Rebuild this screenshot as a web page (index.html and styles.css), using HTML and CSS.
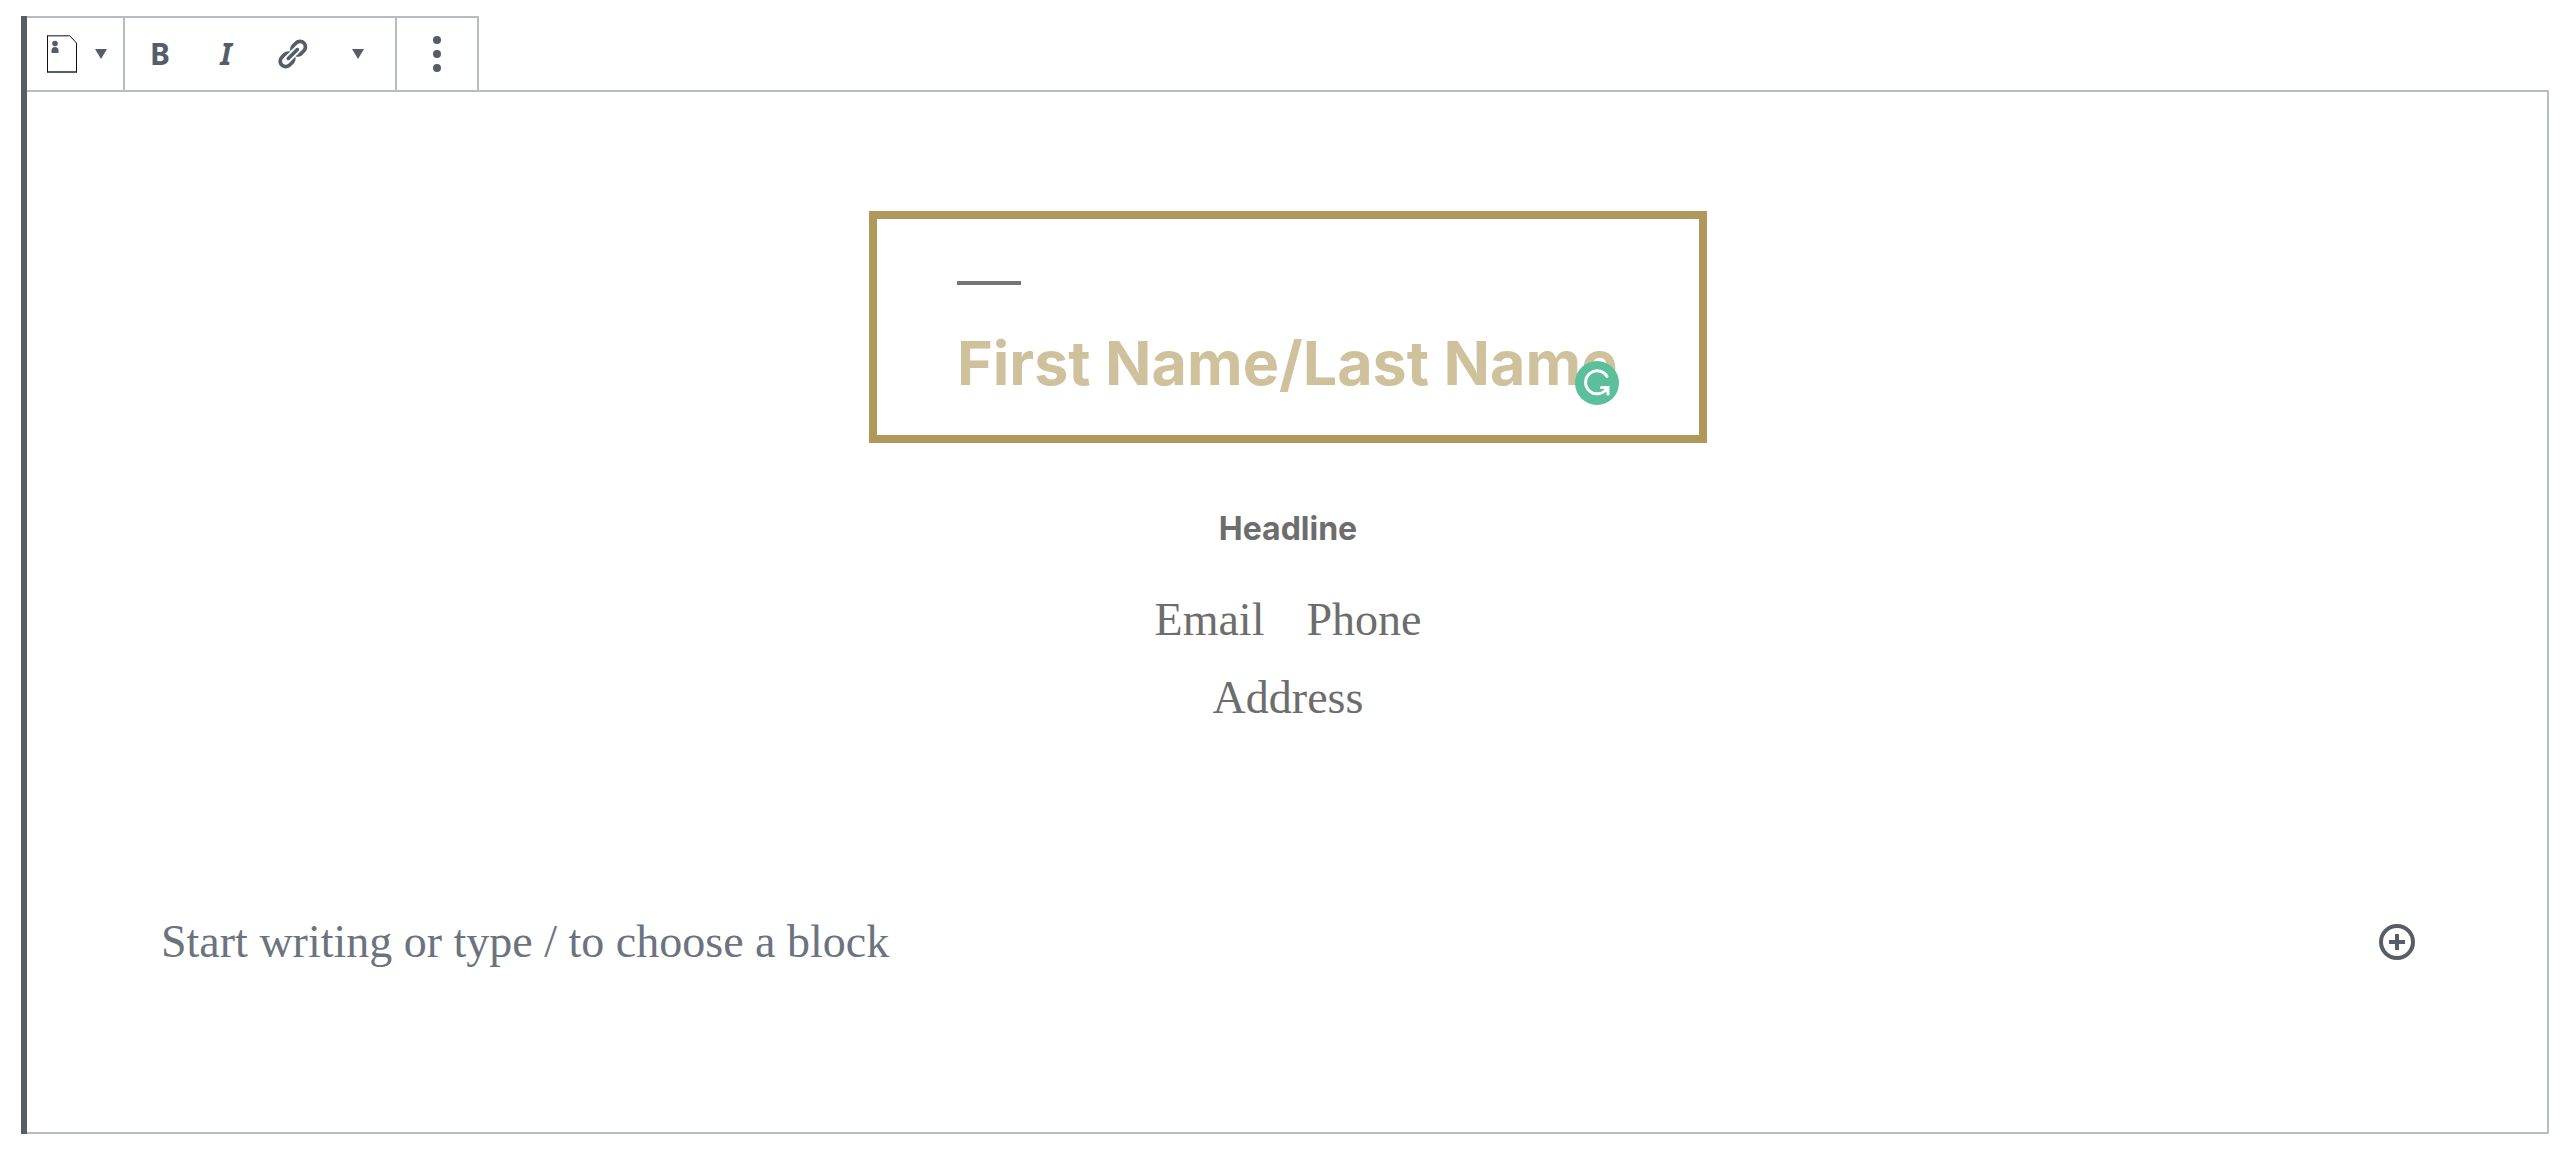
FILE: index.html
```html
<!DOCTYPE html>
<html lang="en">
<head>
<meta charset="utf-8">
<meta name="viewport" content="width=device-width, initial-scale=1">
<title>Block editor</title>
<link rel="stylesheet" href="styles.css">
</head>
<body>
<main class="block">
  <div class="toolbar" role="toolbar" aria-label="Block tools">
    <div class="group">
      <button class="tool switcher" type="button" aria-label="Change block type">
        <svg width="30" height="38" viewBox="0 0 30 38"><path d="M.5 37.5V.5H22.500L29.500 8V37.500Z" fill="none" stroke="#111"/><path d="M1 .5H22M1 37H29" stroke="#555d66" stroke-width="2"/><circle cx="8" cy="8.500" r="2.800" fill="#555d66"/><path d="M4.500 18v-2.500a3.500 3.500 0 0 1 7 0V18Z" fill="#555d66"/></svg>
        <svg width="12" height="10" viewBox="0 0 12 10"><path d="M0 0h12L6 10Z" fill="#555d66"/></svg>
      </button>
    </div>
    <div class="group formats">
      <button class="tool bold" type="button" aria-label="Bold">B</button>
      <button class="tool italic" type="button" aria-label="Italic">I</button>
      <button class="tool" type="button" aria-label="Link">
        <svg width="34" height="34" viewBox="0 0 20 20"><path fill="#555d66" d="M17.74 2.76c1.68 1.69 1.68 4.41 0 6.1l-1.53 1.52c-1.12 1.12-2.7 1.47-4.14 1.09l2.62-2.61.76-.77.76-.76c.84-.84.84-2.2 0-3.04-.84-.85-2.2-.85-3.04 0l-.77.76-3.38 3.38c-.37-1.44-.02-3.02 1.1-4.14l1.52-1.53c1.69-1.68 4.42-1.68 6.1 0zM8.59 13.43l5.34-5.34c.42-.42.42-1.1 0-1.52-.44-.43-1.13-.39-1.53 0l-5.33 5.34c-.42.42-.42 1.1 0 1.52.44.43 1.13.39 1.52 0zm-.76 2.29l4.14-4.15c.38 1.44.03 3.02-1.09 4.14l-1.52 1.53c-1.69 1.68-4.41 1.68-6.1 0-1.68-1.68-1.68-4.42 0-6.1l1.53-1.52c1.12-1.12 2.7-1.47 4.14-1.1l-4.14 4.15c-.85.84-.85 2.2 0 3.05.84.84 2.2.84 3.04 0z"/></svg>
      </button>
      <button class="tool" type="button" aria-label="More rich text controls">
        <svg width="12" height="10" viewBox="0 0 12 10"><path d="M0 0h12L6 10Z" fill="#555d66"/></svg>
      </button>
    </div>
    <div class="group">
      <button class="tool more" type="button" aria-label="More options">
        <svg width="8" height="36" viewBox="0 0 8 36" fill="#555d66"><circle cx="4" cy="4" r="4"/><circle cx="4" cy="18" r="4"/><circle cx="4" cy="32" r="4"/></svg>
      </button>
    </div>
  </div>
  <section class="canvas">
    <div class="name-box">
      <div class="rule"></div>
      <div class="name-field">
        <input class="field name" type="text" placeholder="First Name/Last Name" aria-label="First Name/Last Name">
        <svg class="checker" width="44" height="44" viewBox="0 0 44 44"><circle cx="22" cy="22" r="22" fill="#5bbf9c"/><path d="M32 15.500A11.500 11.500 0 1 0 31.500 28M26.500 26.500H33V33" fill="none" stroke="#fff" stroke-width="3" stroke-linecap="round"/><path d="M28 27h6v6Z" fill="#fff"/></svg>
      </div>
    </div>
    <input class="field headline" type="text" placeholder="Headline" aria-label="Headline">
    <div class="contact">
      <input class="field detail" type="email" placeholder="Email" aria-label="Email">
      <input class="field detail" type="tel" placeholder="Phone" aria-label="Phone">
    </div>
    <input class="field detail" type="text" placeholder="Address" aria-label="Address">
    <div class="appender">
      <input class="field prompt" type="text" placeholder="Start writing or type / to choose a block" aria-label="Add block">
      <button class="add" type="button" aria-label="Add block">
        <svg width="36" height="36" viewBox="0 0 36 36" fill="none" stroke="#555d66" stroke-width="4"><circle cx="18" cy="18" r="16"/><path d="M18 10v16M10 18h16"/></svg>
      </button>
    </div>
  </section>
</main>
</body>
</html>
```
FILE: styles.css
```css
* {
  box-sizing: border-box;
}

body {
  margin: 0;
  padding: 16px 27px 24px 21px;
  background: #fff;
}

button {
  padding: 0;
  border: 0;
  background: none;
  cursor: pointer;
}

svg {
  display: block;
  flex: none;
}

.block {
  border-left: 6px solid #555d66;
}

/* Toolbar */
.toolbar {
  display: flex;
  width: fit-content;
  border-top: 2px solid #b5bcc2;
}

.group {
  display: flex;
  height: 72px;
  border-right: 2px solid #b5bcc2;
}

.formats {
  padding: 0 4px 0 2px;
}

.tool {
  display: flex;
  align-items: center;
  justify-content: center;
  width: 66px;
  color: #555d66;
  font: 700 30px/40px "Noto Sans", sans-serif;
}

.switcher {
  gap: 18px;
  width: 96px;
  padding-left: 4px;
}

.more {
  width: 80px;
}

.italic {
  font-style: italic;
}

/* Editing canvas */
.canvas {
  display: flex;
  flex-direction: column;
  align-items: center;
  padding: 119px 132px 151px 134px;
  border: 2px solid #b5bcc2;
  border-left: 0;
}

.field {
  min-width: 0;
  padding: 0;
  border: 0;
  outline: 0;
  background: none;
  field-sizing: content;
}

.field::placeholder {
  color: inherit;
  opacity: 1;
}

.name-box {
  width: 838px;
  max-width: 100%;
  padding: 62px 80px 32px;
  border: 8px solid #b0985b;
}

.rule {
  width: 64px;
  height: 4px;
  background: #767676;
}

.name-field {
  position: relative;
  margin-top: 38px;
}

.name {
  display: block;
  width: 100%;
  height: 80px;
  color: #d0c19d;
  font: 700 61px/80px Inter, sans-serif;
}

.checker {
  position: absolute;
  right: 0;
  bottom: -2px;
}

.headline {
  height: 40px;
  margin: 66px 0 32px;
  color: #6d6d6d;
  font: 700 32px/40px Inter, sans-serif;
}

.contact {
  display: flex;
  gap: 42px;
}

.detail,
.prompt {
  height: 78px;
  font: 400 46px/78px "Liberation Serif", serif;
}

.detail {
  color: #6d6d6d;
}

.appender {
  display: flex;
  align-items: center;
  width: 100%;
  margin-top: 166px;
}

.prompt {
  flex: 1;
  color: #6c7380;
}
```
